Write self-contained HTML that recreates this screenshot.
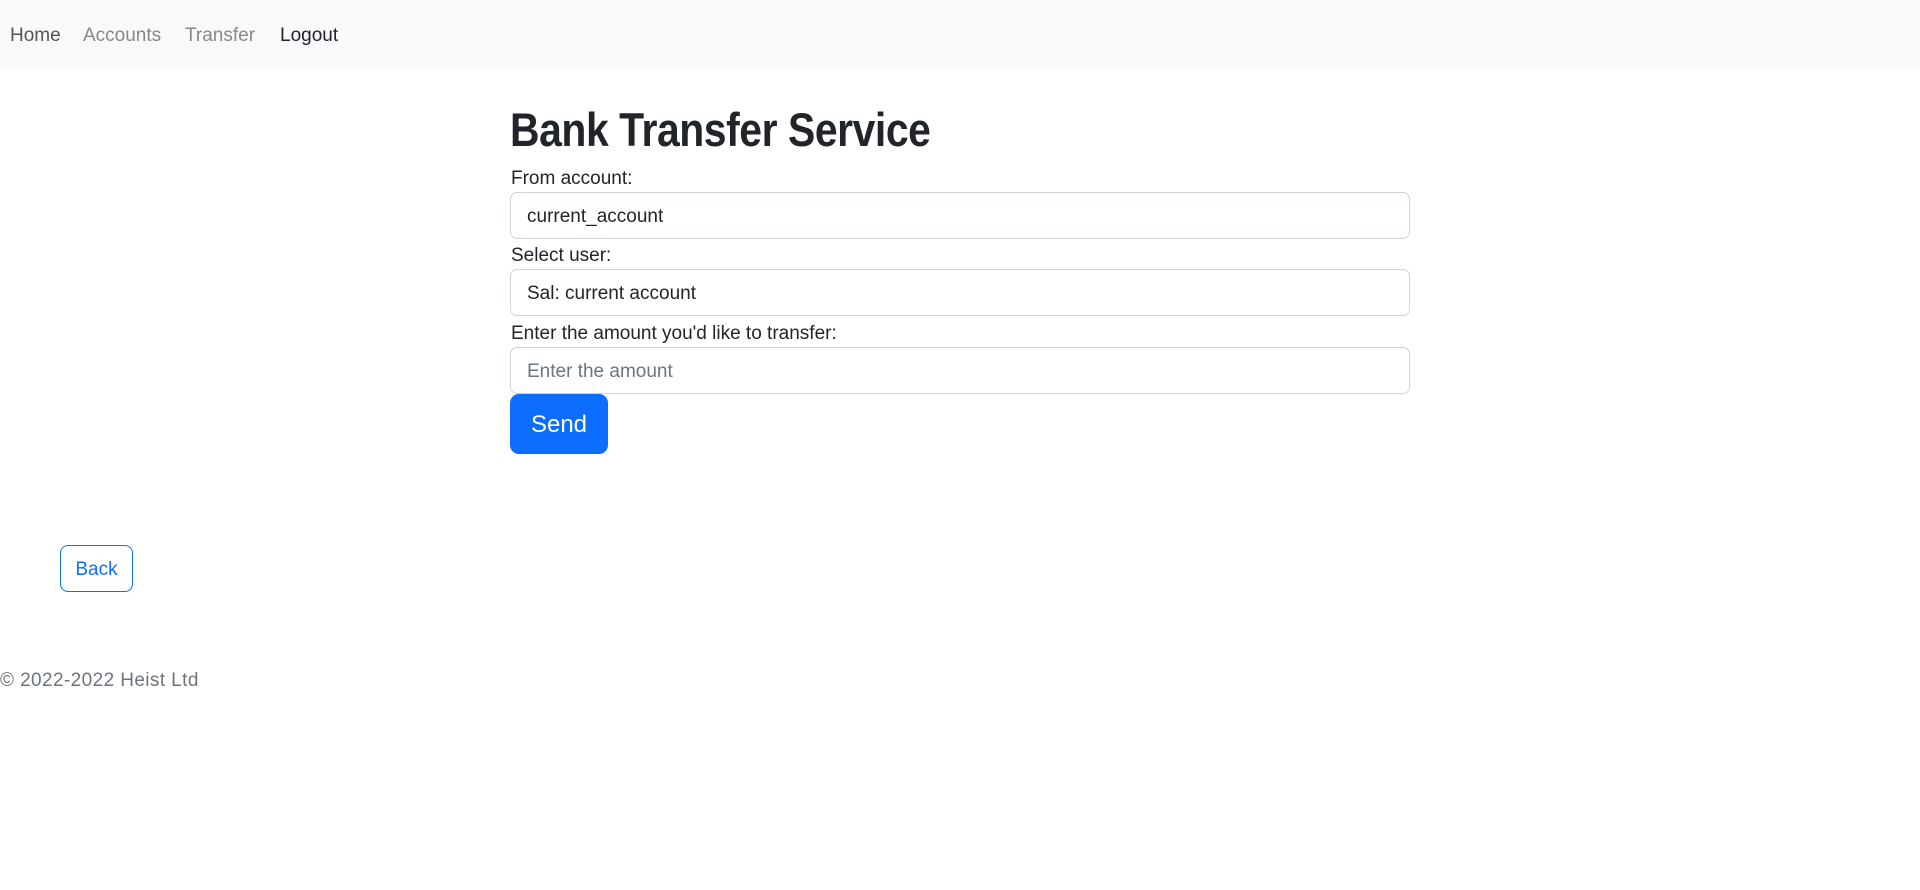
<!DOCTYPE html>
<html><head><meta charset="utf-8"><style>
*{box-sizing:border-box;margin:0;padding:0}
body{width:1920px;height:890px;background:#fff;font-family:"Liberation Sans",sans-serif;color:#212529;position:relative;overflow:hidden;font-size:19px}
.nav{position:absolute;left:0;top:0;width:1920px;height:69px;background:#f8f9fa}
.nav span{position:absolute;top:24px;font-size:19px;line-height:24px}
h1{position:absolute;left:510px;top:102px;font-size:47px;font-weight:bold;line-height:56px;letter-spacing:-0.5px;transform:scaleX(0.87);transform-origin:0 0;white-space:nowrap}
.lbl{position:absolute;left:511px;font-size:19px;line-height:24px}
.inp{position:absolute;left:510px;width:900px;height:47px;border:1px solid #ced4da;border-radius:7px;padding-left:16px;line-height:47px;font-size:19px}
.send{position:absolute;left:510px;top:394px;width:98px;height:60px;background:#0d6efd;color:#fff;border-radius:9px;font-size:24px;line-height:62px;text-align:center}
.back{position:absolute;left:60px;top:545px;width:73px;height:47px;border:1px solid #0d6efd;color:#0d6efd;border-radius:8px;font-size:19px;line-height:47px;text-align:center}
.foot{position:absolute;left:0;top:669px;font-size:19px;color:#6c757d;line-height:24px;letter-spacing:0.4px}
</style></head><body>
<div class="nav">
<span style="left:10px;color:#555">Home</span>
<span style="left:83px;color:#888">Accounts</span>
<span style="left:185px;color:#888">Transfer</span>
<span style="left:280px;color:#212529">Logout</span>
</div>
<h1>Bank Transfer Service</h1>
<div class="lbl" style="top:167px">From account:</div>
<div class="inp" style="top:192px">current_account</div>
<div class="lbl" style="top:244px">Select user:</div>
<div class="inp" style="top:269px">Sal: current account</div>
<div class="lbl" style="top:322px">Enter the amount you'd like to transfer:</div>
<div class="inp" style="top:347px;color:#6c757d">Enter the amount</div>
<div class="send">Send</div>
<div class="back">Back</div>
<div class="foot">© 2022-2022 Heist Ltd</div>
</body></html>
